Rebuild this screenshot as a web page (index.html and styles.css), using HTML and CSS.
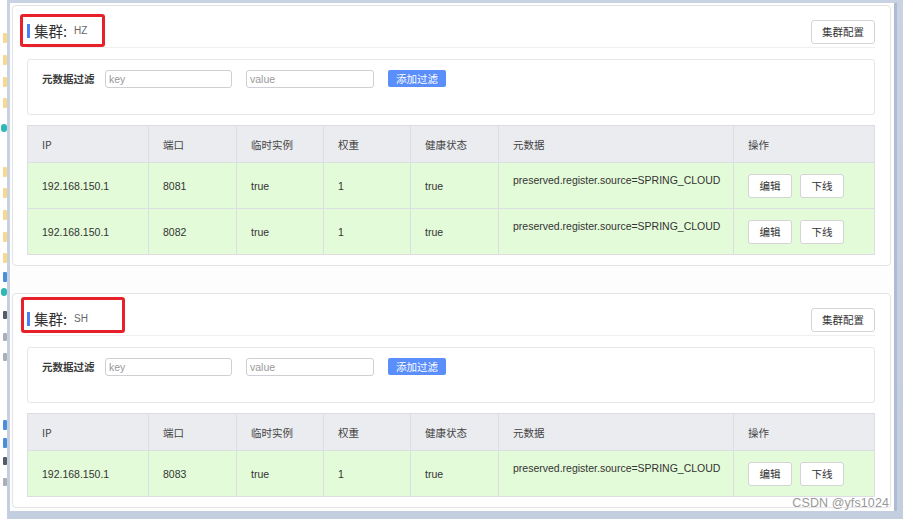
FILE: index.html
```html
<!DOCTYPE html>
<html lang="zh-CN">
<head>
<meta charset="utf-8">
<title>集群</title>
<link rel="stylesheet" href="styles.css">
</head>
<body>
<div class="desk">
  <i class="ico folder" style="top:33px"></i>
  <i class="ico folder" style="top:55px"></i>
  <i class="ico folder" style="top:77px"></i>
  <i class="ico folder" style="top:98px"></i>
  <i class="ico teal" style="top:124px"></i>
  <i class="ico folder" style="top:167px"></i>
  <i class="ico folder" style="top:188px"></i>
  <i class="ico folder" style="top:210px"></i>
  <i class="ico folder" style="top:232px"></i>
  <i class="ico folder" style="top:253px"></i>
  <i class="ico blue" style="top:272px"></i>
  <i class="ico teal" style="top:288px"></i>
  <i class="ico dark" style="top:311px"></i>
  <i class="ico grey" style="top:333px"></i>
  <i class="ico grey" style="top:353px"></i>
  <i class="ico blue" style="top:420px"></i>
  <i class="ico blue" style="top:438px"></i>
  <i class="ico dark" style="top:457px"></i>
  <i class="ico grey" style="top:478px"></i>
</div>
<div class="frame">
  <div class="page">
    <section class="card">
      <div class="mark mark-hz"></div>
      <header class="card-head">
        <h2 class="title"><span class="bar"></span>集群:<small>HZ</small></h2>
        <button class="btn">集群配置</button>
      </header>
      <div class="filter">
        <span class="label">元数据过滤</span>
        <input class="field field-key" placeholder="key">
        <input class="field field-value" placeholder="value">
        <button class="btn-primary">添加过滤</button>
      </div>
      <table class="grid">
        <colgroup>
          <col class="c-ip"><col class="c-port"><col class="c-eph"><col class="c-weight"><col class="c-health"><col class="c-meta"><col class="c-op">
        </colgroup>
        <thead>
          <tr><th>IP</th><th>端口</th><th>临时实例</th><th>权重</th><th>健康状态</th><th>元数据</th><th>操作</th></tr>
        </thead>
        <tbody>
          <tr><td>192.168.150.1</td><td>8081</td><td>true</td><td>1</td><td>true</td><td class="meta">preserved.register.source=SPRING_CLOUD</td><td><button class="btn">编辑</button><button class="btn">下线</button></td></tr>
          <tr><td>192.168.150.1</td><td>8082</td><td>true</td><td>1</td><td>true</td><td class="meta">preserved.register.source=SPRING_CLOUD</td><td><button class="btn">编辑</button><button class="btn">下线</button></td></tr>
        </tbody>
      </table>
    </section>

    <section class="card card-second">
      <div class="mark mark-sh"></div>
      <header class="card-head">
        <h2 class="title"><span class="bar"></span>集群:<small>SH</small></h2>
        <button class="btn">集群配置</button>
      </header>
      <div class="filter">
        <span class="label">元数据过滤</span>
        <input class="field field-key" placeholder="key">
        <input class="field field-value" placeholder="value">
        <button class="btn-primary">添加过滤</button>
      </div>
      <table class="grid">
        <colgroup>
          <col class="c-ip"><col class="c-port"><col class="c-eph"><col class="c-weight"><col class="c-health"><col class="c-meta"><col class="c-op">
        </colgroup>
        <thead>
          <tr><th>IP</th><th>端口</th><th>临时实例</th><th>权重</th><th>健康状态</th><th>元数据</th><th>操作</th></tr>
        </thead>
        <tbody>
          <tr><td>192.168.150.1</td><td>8083</td><td>true</td><td>1</td><td>true</td><td class="meta">preserved.register.source=SPRING_CLOUD</td><td><button class="btn">编辑</button><button class="btn">下线</button></td></tr>
        </tbody>
      </table>
    </section>
    <div class="watermark">CSDN @yfs1024</div>
  </div>
</div>
</body>
</html>
```

FILE: styles.css
```css
* { box-sizing: border-box; }

html, body {
  margin: 0;
  width: 903px;
  height: 519px;
  overflow: hidden;
}

body {
  display: flex;
  background: #ffffff;
  font-family: "Liberation Sans", "Noto Sans CJK SC", sans-serif;
  font-size: 10.5px;
  color: #333;
}

.desk {
  width: 7px;
  height: 519px;
  position: relative;
  flex: none;
}

.ico {
  position: absolute;
  left: 3px;
  width: 4px;
  height: 10px;
  border-radius: 1px;
}
.ico.folder { background: #f6d98b; }
.ico.teal { background: #2fb7b4; left: 1px; width: 6px; height: 8px; border-radius: 3px; }
.ico.blue { background: #4a8fd9; }
.ico.dark { background: #555c66; height: 8px; }
.ico.grey { background: #aab0b8; height: 8px; }

.frame {
  flex: 1;
  height: 519px;
  background: linear-gradient(#c9d3e3, #c3cede);
  padding: 3px 10px 8px 3px;
}

.page {
  position: relative;
  height: 508px;
  background: #fdfdfd;
  padding: 2px 3px 0 2px;
  box-shadow: 3px 0 0 #aebbd0;
}

.card {
  position: relative;
  background: #fff;
  border: 1px solid #e4e4e4;
  border-radius: 4px;
  padding: 0 15px 10px 14px;
}

.card-second {
  margin-top: 27px;
}

.mark {
  position: absolute;
  border: 3px solid #e8202a;
  border-radius: 3px;
  pointer-events: none;
}
.mark-hz { left: 7px; top: 8px; width: 85px; height: 33px; }
.mark-sh { left: 8px; top: 3px; width: 104px; height: 36px; }

.card-head {
  display: flex;
  justify-content: space-between;
  align-items: center;
  padding: 14px 0 3px;
  border-bottom: 1px solid #efefef;
}

.title {
  margin: 0 0 3px;
  display: flex;
  align-items: center;
  font-size: 14.5px;
  font-weight: normal;
  color: #333;
  font-family: "Noto Sans CJK SC", sans-serif;
  line-height: 16px;
}

.bar {
  width: 3px;
  height: 14px;
  background: #4b7ff5;
  margin-right: 4px;
}

.title small {
  font-family: "Liberation Sans", sans-serif;
  font-size: 10px;
  color: #666;
  margin-left: 7px;
}

.btn {
  font-family: "Noto Sans CJK SC", sans-serif;
  font-size: 10.5px;
  color: #333;
  background: #fff;
  border: 1px solid #d4d4d4;
  border-radius: 3px;
  height: 24px;
  padding: 0 10px;
  line-height: 22px;
}

.card-head .btn {
  width: 64px;
  padding: 0;
  margin-right: 0;
}

.filter {
  margin-top: 11px;
  height: 56px;
  border: 1px solid #e6e6e6;
  border-radius: 3px;
  padding: 10px 0 0 14px;
  display: flex;
  align-items: flex-start;
}

.label {
  font-family: "Noto Sans CJK SC", sans-serif;
  font-weight: 600;
  color: #3a3a3a;
  width: 53px;
  line-height: 18px;
  margin-right: 10px;
  white-space: nowrap;
}

.field {
  height: 18px;
  border: 1px solid #cfcfd4;
  border-radius: 3px;
  padding: 0 3px;
  font-family: "Liberation Sans", sans-serif;
  font-size: 10.5px;
  color: #333;
  outline: none;
}
.field::placeholder { color: #999; }
.field-key { width: 127px; margin-right: 14px; }
.field-value { width: 128px; margin-right: 14px; }

.btn-primary {
  width: 58px;
  height: 17px;
  border: none;
  border-radius: 2px;
  background: #5a8efb;
  color: #fff;
  font-family: "Noto Sans CJK SC", sans-serif;
  font-size: 10.5px;
  line-height: 17px;
  padding: 0;
}

.grid {
  margin-top: 10px;
  width: 847px;
  table-layout: fixed;
  border-collapse: collapse;
  border: 1px solid #dcdee3;
}

.c-ip { width: 121px; }
.c-port { width: 88px; }
.c-eph { width: 87px; }
.c-weight { width: 87px; }
.c-health { width: 88px; }
.c-meta { width: 235px; }
.c-op { width: 141px; }

.grid th,
.grid td {
  text-align: left;
  padding: 0 0 0 14px;
  border: 1px solid #dcdee3;
  white-space: nowrap;
  overflow: hidden;
}

.grid th {
  height: 37px;
  background: #ebecf0;
  font-weight: normal;
  color: #444;
  font-family: "Noto Sans CJK SC", sans-serif;
}

.grid td {
  height: 46px;
  background: #e3fbd9;
  color: #333;
}

.grid td.meta {
  vertical-align: top;
  padding-top: 10px;
  line-height: 14px;
}

.grid td .btn {
  width: 44px;
  padding: 0;
  margin-right: 8px;
}

.watermark {
  position: absolute;
  right: 5px;
  bottom: 1px;
  font-family: "Liberation Sans", sans-serif;
  font-size: 12.5px;
  color: #999;
  text-shadow: 0 0 1px #fff, 0 0 1px #fff;
  letter-spacing: 0.1px;
}
```
